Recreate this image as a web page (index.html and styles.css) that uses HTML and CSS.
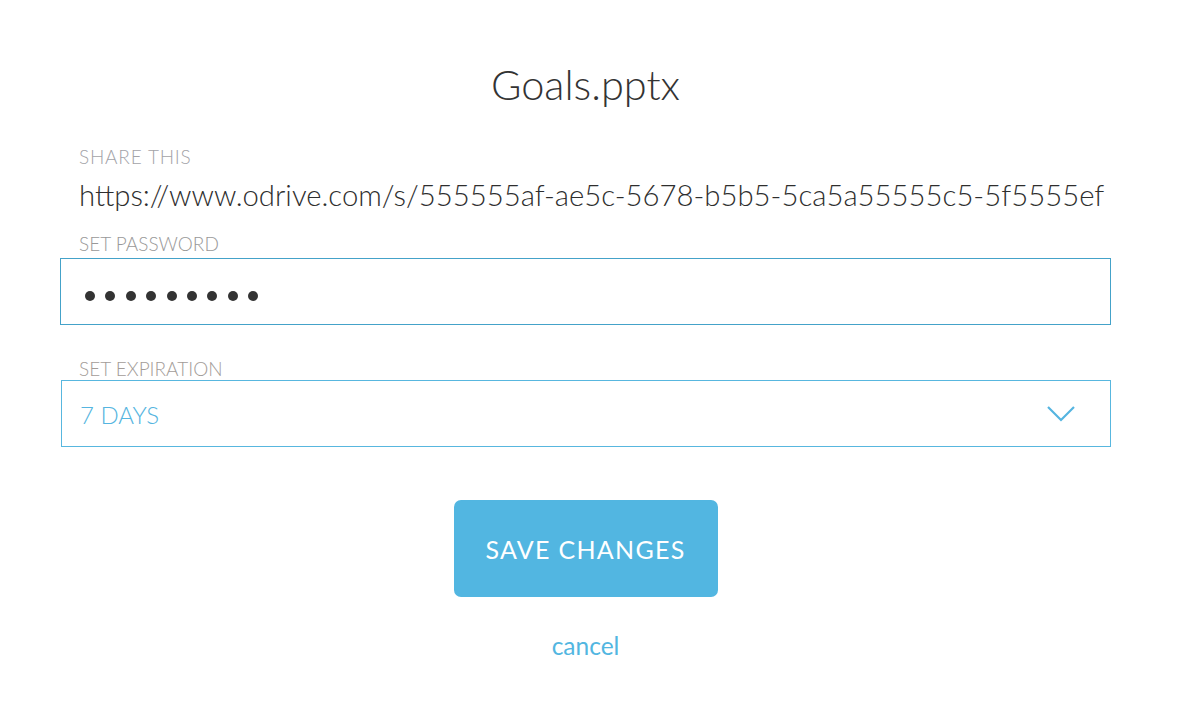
FILE: index.html
```html
<!DOCTYPE html>
<html>
<head>
<meta charset="utf-8">
<link rel="stylesheet" href="styles.css">
</head>
<body>
<div class="dialog">
  <h1 class="title">Goals.pptx</h1>
  <div class="label label-share">SHARE THIS</div>
  <div class="url">https://www.odrive.com/s/555555af-ae5c-5678-b5b5-5ca5a55555c5-5f5555ef</div>
  <div class="label label-pass">SET PASSWORD</div>
  <div class="field field-pass">
    <div class="dots"><span></span><span></span><span></span><span></span><span></span><span></span><span></span><span></span><span></span></div>
  </div>
  <div class="label label-exp">SET EXPIRATION</div>
  <div class="field field-select">
    <span class="select-value">7 DAYS</span>
    <svg class="chevron" width="30" height="18" viewBox="0 0 30 18"><path d="M2 2 L15 15 L28 2" fill="none" stroke="#55b5e0" stroke-width="2.2"/></svg>
  </div>
  <div class="actions">
    <button class="save">SAVE CHANGES</button>
    <a class="cancel">cancel</a>
  </div>
</div>
</body>
</html>
```
FILE: styles.css
```css
html, body { margin: 0; padding: 0; background: #fff; }
body { font-family: Lato, "Open Sans", sans-serif; color: #333; }
.dialog { width: 1051px; margin-left: 60px; padding-top: 60px; }
.title { margin: 0; font-size: 41.5px; font-weight: 300; line-height: 48px; text-align: center; color: #333; }
.label { font-size: 19px; font-weight: 300; line-height: 23px; color: #999; padding-left: 19px; }
.label-share { margin-top: 37px; letter-spacing: 0.8px; color: #a3a3a8; }
.url { font-size: 29.3px; font-weight: 300; line-height: 34px; padding-left: 19px; margin-top: 10px; color: #2e2e2e; white-space: nowrap; }
.label-pass { margin-top: 20px; color: #999; }
.field { box-sizing: border-box; height: 67px; display: flex; align-items: center; }
.field-pass { border: 1px solid #44a2c9; padding-left: 24px; margin-top: 3px; }
.dots { display: flex; gap: 10.4px; padding-top: 8px; }
.dots span { width: 10px; height: 10px; border-radius: 50%; background: #333; }
.label-exp { margin-top: 32px; color: #a39c98; }
.field-select { border: 1px solid #58b7df; margin-left: 1px; padding: 0 34px 0 18px; justify-content: space-between; }
.select-value { font-size: 24px; font-weight: 300; color: #55b5e0; padding-top: 2px; }
.chevron { display: block; }
.actions { display: flex; flex-direction: column; align-items: center; margin-top: 53px; }
.save { width: 264px; height: 97px; border: none; border-radius: 7px; background: #52b6e1; color: #fff; font-family: Lato, sans-serif; font-size: 25px; font-weight: 400; letter-spacing: 1.3px; padding: 0; }
.cancel { margin-top: 34px; font-size: 24.5px; color: #52b6e1; text-decoration: none; line-height: 29px; }
```
